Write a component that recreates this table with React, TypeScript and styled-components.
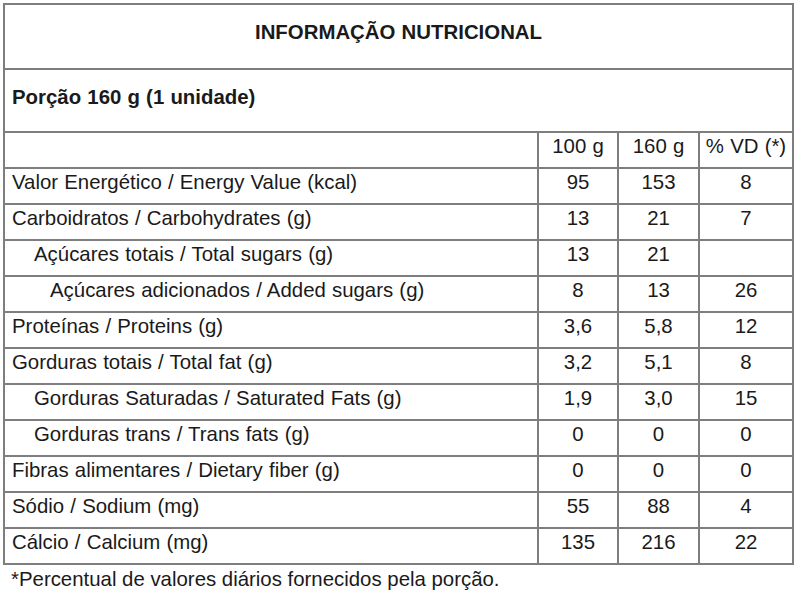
import React from 'react';
import styled, { createGlobalStyle } from 'styled-components';

const GlobalStyle = createGlobalStyle`
  html, body {
    margin: 0;
    padding: 0;
    background: #ffffff;
  }
  body {
    font-family: "Liberation Sans", Arial, sans-serif;
    color: #1a1a1a;
  }
`;

type Row = {
  label: string;
  level?: 0 | 1 | 2;
  per100: string;
  portion: string;
  vd: string;
};

const ROWS: Row[] = [
  { label: 'Valor Energético / Energy Value (kcal)', per100: '95', portion: '153', vd: '8' },
  { label: 'Carboidratos / Carbohydrates (g)', per100: '13', portion: '21', vd: '7' },
  { label: 'Açúcares totais / Total sugars (g)', level: 1, per100: '13', portion: '21', vd: '' },
  { label: 'Açúcares adicionados / Added sugars (g)', level: 2, per100: '8', portion: '13', vd: '26' },
  { label: 'Proteínas / Proteins (g)', per100: '3,6', portion: '5,8', vd: '12' },
  { label: 'Gorduras totais / Total fat (g)', per100: '3,2', portion: '5,1', vd: '8' },
  { label: 'Gorduras Saturadas / Saturated Fats (g)', level: 1, per100: '1,9', portion: '3,0', vd: '15' },
  { label: 'Gorduras trans / Trans fats (g)', level: 1, per100: '0', portion: '0', vd: '0' },
  { label: 'Fibras alimentares / Dietary fiber (g)', per100: '0', portion: '0', vd: '0' },
  { label: 'Sódio / Sodium (mg)', per100: '55', portion: '88', vd: '4' },
  { label: 'Cálcio / Calcium (mg)', per100: '135', portion: '216', vd: '22' },
];

export default function App() {
  return (
    <>
      <GlobalStyle />
      <Page>
        <Table>
          <colgroup>
            <col style={{ width: 534 }} />
            <col style={{ width: 80 }} />
            <col style={{ width: 81 }} />
            <col style={{ width: 94 }} />
          </colgroup>
          <tbody>
            <TitleRow>
              <TitleCell colSpan={4}>INFORMAÇÃO NUTRICIONAL</TitleCell>
            </TitleRow>
            <PortionRow>
              <PortionCell colSpan={4}>Porção 160 g (1 unidade)</PortionCell>
            </PortionRow>
            <DataRow>
              <LabelCell />
              <ValueCell>100 g</ValueCell>
              <ValueCell>160 g</ValueCell>
              <ValueCell>% VD (*)</ValueCell>
            </DataRow>
            {ROWS.map((r) => (
              <DataRow key={r.label}>
                <LabelCell $level={r.level ?? 0}>{r.label}</LabelCell>
                <ValueCell>{r.per100}</ValueCell>
                <ValueCell>{r.portion}</ValueCell>
                <ValueCell>{r.vd}</ValueCell>
              </DataRow>
            ))}
          </tbody>
        </Table>
        <Footnote>*Percentual de valores diários fornecidos pela porção.</Footnote>
      </Page>
    </>
  );
}

const Page = styled.div`
  padding: 3px 0 0 3px;
  width: 797px;
`;

const Table = styled.table`
  width: 789px;
  border-collapse: collapse;
  table-layout: fixed;
  font-size: 20.4px;
  word-spacing: 0.5px;

  td {
    border: 2px solid #7e7e7e;
    line-height: 23px;
  }
`;

const TitleRow = styled.tr`
  height: 65px;
`;

const TitleCell = styled.td`
  text-align: center;
  font-weight: bold;
  padding: 0 0 8px;
`;

const PortionRow = styled.tr`
  height: 63px;
`;

const PortionCell = styled.td`
  font-weight: bold;
  padding: 0 7px 6px;
`;

const DataRow = styled.tr`
  height: 36px;
`;

const LabelCell = styled.td<{ $level?: number }>`
  padding: 0 0 7px ${({ $level = 0 }) => 7 + $level * 22 - ($level === 2 ? 6 : 0)}px;
  white-space: nowrap;
`;

const ValueCell = styled.td`
  text-align: center;
  padding: 0 0 7px;
  white-space: nowrap;
`;

const Footnote = styled.p`
  margin: 3px 0 0 8px;
  font-size: 20.4px;
  line-height: 23px;
`;
